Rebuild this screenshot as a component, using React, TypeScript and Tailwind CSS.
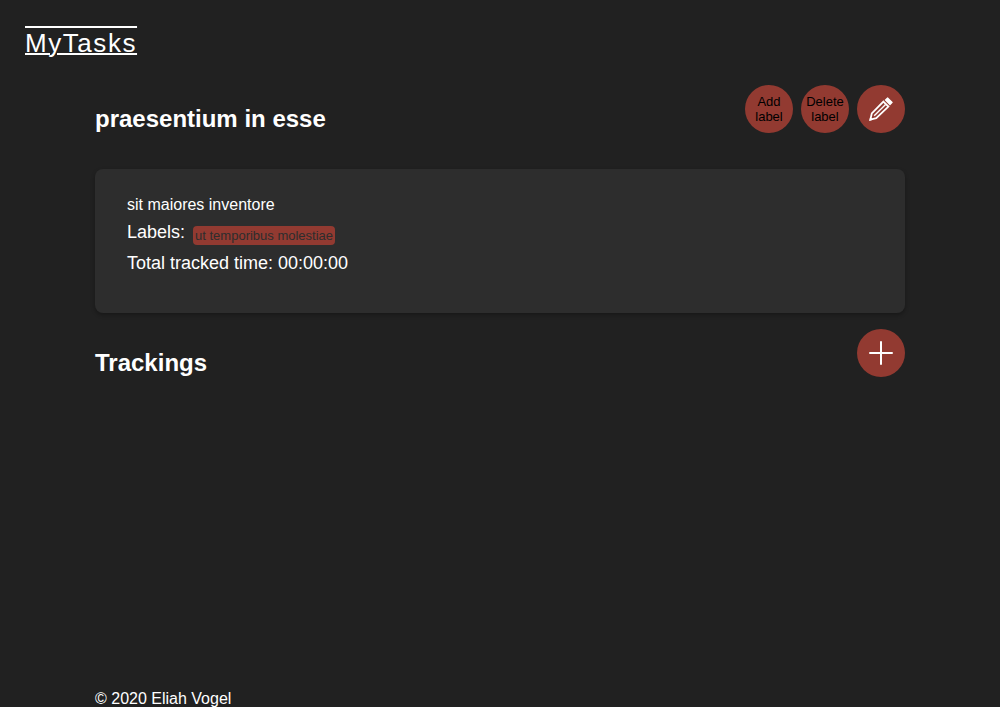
import type { ReactNode } from 'react';

type RoundButtonProps = { label?: string; children: ReactNode };

function RoundButton({ label, children }: RoundButtonProps) {
  return (
    <button
      type="button"
      aria-label={label}
      className="flex size-12 shrink-0 cursor-pointer items-center justify-center rounded-full bg-[#923a31] text-center text-[13px] leading-[15px] text-black"
    >
      {children}
    </button>
  );
}

function PencilIcon() {
  return (
    <svg viewBox="0 0 24 24" className="size-6" fill="none" stroke="#fff" aria-hidden="true">
      <path d="M14.4 4.6 19.4 9.6 7.2 21.2 1.4 22.6 2.8 16.4Z" strokeWidth="1.8" />
      <path d="M5.2 18.8 16.6 7.4" strokeWidth="1.4" />
      <path d="M.2 24 1.2 19.8 4.2 22.8Z" fill="#fff" stroke="none" />
      <path d="M15.6 3 18.2 .4Q18.6 0 19 .4L23.6 5Q24 5.4 23.6 5.8L21 8.4Z" fill="#fff" stroke="none" />
    </svg>
  );
}

function PlusIcon() {
  return (
    <svg viewBox="0 0 24 24" className="size-6" fill="none" stroke="#fff" strokeWidth="2" strokeLinecap="round" aria-hidden="true">
      <path d="M12 1V23M1 12H23" />
    </svg>
  );
}

export default function App() {
  return (
    <div className="flex min-h-screen flex-col bg-[#212121] font-['Liberation_Sans',Arial,sans-serif] text-base text-white">
      <header className="px-[25px] pt-[29px]">
        <a
          href="#"
          className="block w-fit text-[26px] leading-7 tracking-[0.06em] decoration-2 [text-decoration-line:underline_overline]"
        >
          MyTasks
        </a>
      </header>

      <main className="mx-auto w-full max-w-[850px] grow px-5 pt-7">
        <div className="flex items-start justify-between">
          <h1 className="pt-5 text-2xl leading-7 font-bold">praesentium in esse</h1>
          <div className="flex gap-2">
            <RoundButton>
              Add
              <br />
              label
            </RoundButton>
            <RoundButton>
              Delete
              <br />
              label
            </RoundButton>
            <RoundButton label="Edit task">
              <PencilIcon />
            </RoundButton>
          </div>
        </div>

        <section className="mt-9 rounded-lg bg-[#2d2d2d] px-8 pt-[26px] pb-10 shadow-[0_2px_4px_rgba(0,0,0,0.3)]">
          <p className="leading-5">sit maiores inventore</p>
          <div className="mt-[7px] flex items-start gap-2 text-lg leading-5">
            <span>Labels:</span>
            <span className="mt-1 rounded bg-[#923a31] px-0.5 text-[13px] leading-[19px] text-[#2d2d2d]">
              ut temporibus molestiae
            </span>
          </div>
          <p className="mt-2 text-lg leading-5">Total tracked time: 00:00:00</p>
        </section>

        <div className="mt-4 flex items-start justify-between">
          <h2 className="pt-5 text-2xl leading-7 font-bold">Trackings</h2>
          <RoundButton label="Add tracking">
            <PlusIcon />
          </RoundButton>
        </div>
      </main>

      <footer className="mx-auto w-full max-w-[850px] px-5 leading-4">© 2020 Eliah Vogel</footer>
    </div>
  );
}
